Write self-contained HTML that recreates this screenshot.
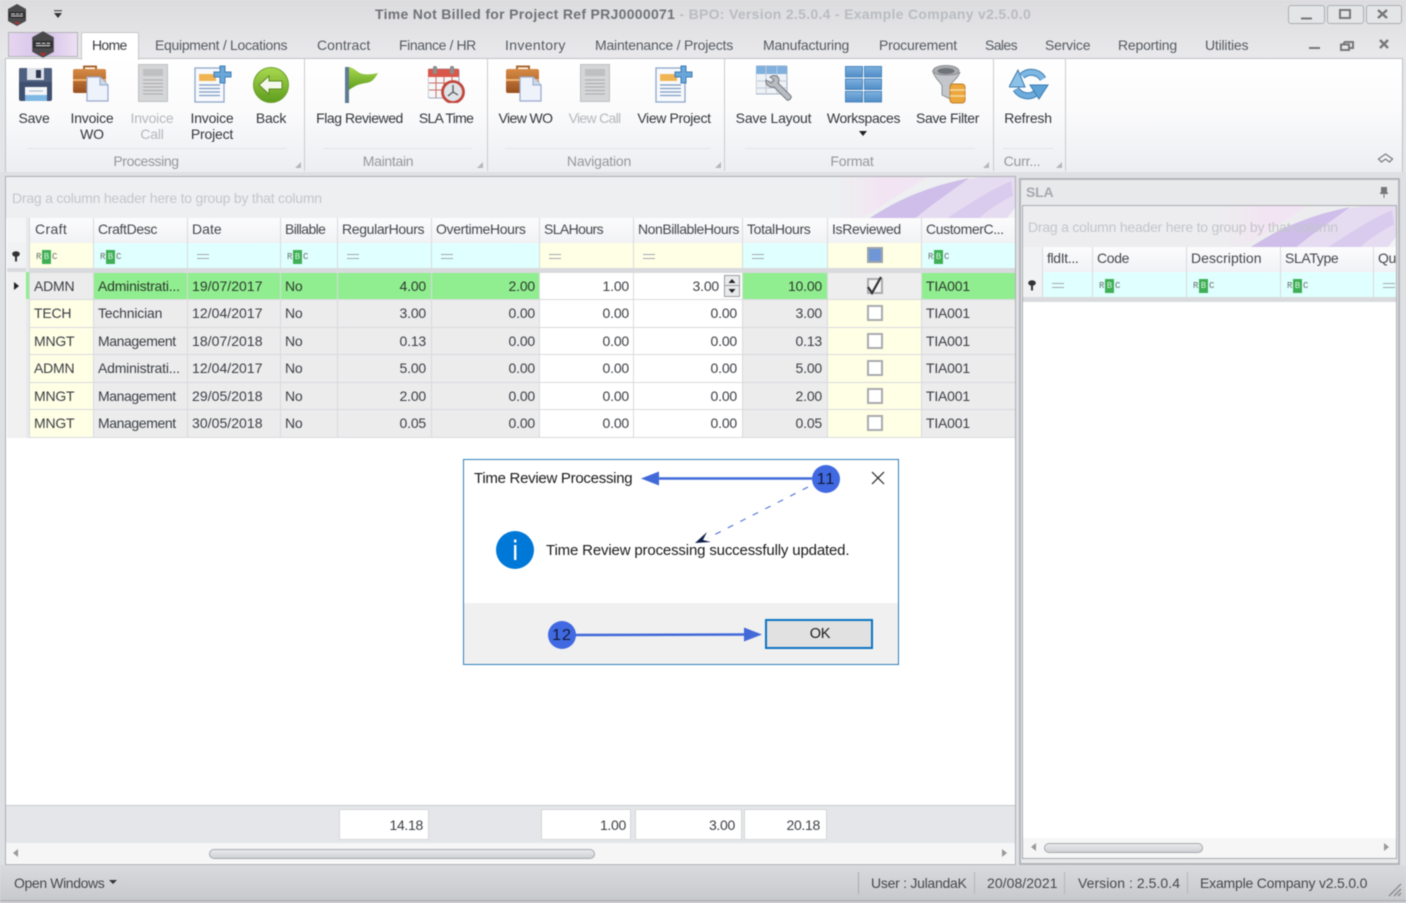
<!DOCTYPE html>
<html><head><meta charset="utf-8"><title>Time Not Billed</title>
<style>
html,body{margin:0;padding:0;width:1406px;height:903px;overflow:hidden;background:#e4e5e7}
#p{position:absolute;left:0;top:0;width:1406px;height:903px;overflow:hidden;font:14px "Liberation Sans",sans-serif;color:#3c3f44;filter:blur(.45px)}
.b{position:absolute}
.t{position:absolute;white-space:nowrap;line-height:16px;letter-spacing:-.2px}
.tab{top:37px;color:#555a61}
.rb{color:#33363b;text-align:center;transform:translateX(-50%);line-height:16px}
.dis{color:#b5b7bb}
.cap{top:153px;color:#94979c;transform:translateX(-50%)}
.ls{position:absolute;width:0;height:0;border-left:6px solid transparent;border-bottom:6px solid #b3b6ba}
.row{position:absolute;display:flex;height:26px}
.c{box-sizing:border-box;height:100%;padding:0 4px;line-height:26px;white-space:nowrap;overflow:hidden;margin-right:1px;letter-spacing:-.2px;background:#ececed;color:#3b3e43;flex:none}
.n{text-align:right}
.row>.n:nth-child(5),.row>.n:nth-child(8),.row>.n:nth-child(9){padding-right:5px}
.row>.c:nth-child(3){letter-spacing:.05px}
.row>.c.m{letter-spacing:-.4px}
.y{background:#ffffe6}.w{background:#fff}.g{background:#90ee90;color:#2c3a2c}.cy{background:#e0ffff}
.c.h{background:linear-gradient(#fcfcfd,#f1f2f4);color:#44474c;line-height:23px;letter-spacing:-.35px}
.eq{display:block;width:12px;height:3px;border-top:1.6px solid #a3a7ac;border-bottom:1.6px solid #a3a7ac;margin:11px 0 0 5px}
.abc{display:block;position:relative;width:22px;height:14px;margin:7px 0 0 2px;font:9px/14px "Liberation Mono",monospace;color:#67706b;letter-spacing:0}
.abc i{position:absolute;font-style:normal;left:0}.abc u{position:absolute;text-decoration:none;left:6px;width:9px;height:14px;background:#3fae55;color:#d6f5dc;text-align:center;line-height:14px}.abc s{position:absolute;text-decoration:none;left:16px}
.cb{display:block;box-sizing:border-box;width:16px;height:16px;border:2px solid #a9abae;background:#fff;margin:5px auto 0}
</style></head><body><div id="p">
<svg width="0" height="0" style="position:absolute">
<defs>
<linearGradient id="blu" x1="0" y1="0" x2="0" y2="1"><stop offset="0" stop-color="#7fb2df"/><stop offset="1" stop-color="#4f8cc6"/></linearGradient>
<linearGradient id="grn" x1="0" y1="0" x2="0" y2="1"><stop offset="0" stop-color="#a9d84f"/><stop offset="1" stop-color="#5d9d1d"/></linearGradient>
<linearGradient id="brn" x1="0" y1="0" x2="0" y2="1"><stop offset="0" stop-color="#d78b45"/><stop offset="1" stop-color="#99501f"/></linearGradient>
<linearGradient id="pk" x1="0" y1="0" x2="1" y2="0"><stop offset="0" stop-color="#f3e6f3" stop-opacity="0"/><stop offset=".5" stop-color="#f3e4f3"/><stop offset="1" stop-color="#f2e6f4"/></linearGradient>
<symbol id="wo" viewBox="0 0 38 38">
<path d="M12 6V2.500h12V6" fill="none" stroke="#a9662c" stroke-width="2"/>
<rect x="1" y="5" width="33" height="24" rx="2" fill="url(#brn)"/><rect x="1" y="15" width="33" height="2" fill="#efb36f"/>
<path d="M15 13h13l8 8v16H15z" fill="#eef2fb" stroke="#97a9c9" stroke-width="1.200"/><path d="M28 13v8h8" fill="#cbd7ea" stroke="#97a9c9"/>
</symbol>
<symbol id="dc" viewBox="0 0 30 38">
<rect x=".5" y=".5" width="29" height="37" fill="#d5d6d7" stroke="#bfc0c2"/><rect x="5" y="5" width="20" height="7" fill="#bfc0c1"/>
<path d="M5 16h20M5 19.500h20M5 23h20M5 26.500h20M5 30h20" stroke="#aaaaac"/>
</symbol>
<symbol id="pr" viewBox="0 0 38 38">
<rect x="1" y="3" width="29" height="34" fill="#f7f9fc" stroke="#8fa8c9" stroke-width="1.300"/><rect x="5" y="9" width="17" height="7" fill="#f0b552"/>
<path d="M5 20h21M5 23.500h21M5 27h21M5 30.500h21" stroke="#7e9cc2" stroke-width="1.200"/>
<path d="M26 1h5v6h6v5h-6v6h-5v-6h-6V7h6z" fill="#6aa7d9" stroke="#3f7db5"/>
</symbol>
<symbol id="hex" viewBox="0 0 20 22"><path d="M10 0l9 5v12l-9 5-9-5V5z" fill="#4a4a4c"/><rect x="2" y="8" width="16" height="6" fill="#2e2e30"/><path d="M4 10h4M9 10h3M13 10h3M4 12h12" stroke="#d9d9d9" stroke-width=".9"/><path d="M7 18h6l-3 3z" fill="#a33"/></symbol>
<symbol id="swoosh" viewBox="0 0 176 40" preserveAspectRatio="none">
<path d="M0 0H88L22 40H0z" fill="url(#pk)"/>
<path d="M30 40C60 22 92 8 142 0H176V40z" fill="#e6dcf1"/>
<path d="M30 40C55 24 85 10 130 1C112 14 92 27 76 40z" fill="#cebee9"/>
<path d="M108 40C130 26 152 12 172 4L174 18C160 25 148 33 140 40z" fill="#d9cbed"/>
<path d="M168 40L176 30V40z" fill="#f2f2f4"/>
</symbol>
</defs></svg>

<!-- title bar -->
<div class="b" style="left:0;top:0;width:1406px;height:58px;background:linear-gradient(#dcdcde,#e9e9eb)"></div>
<svg class="b" style="left:7px;top:4px" width="20" height="22"><use href="#hex"/></svg>
<svg class="b" style="left:53px;top:10px" width="11" height="9"><path d="M1 .7h8" stroke="#333"/><path d="M1 3h8L5 8z" fill="#333"/></svg>
<div class="t" style="left:375px;top:6px;font-weight:bold;color:#6f7277;letter-spacing:.3px">Time Not Billed for Project Ref PRJ0000071 <span style="color:#b9bcc1">- BPO: Version 2.5.0.4 - Example Company v2.5.0.0</span></div>
<div class="b" style="left:1288px;top:5px;width:35px;height:17px;border:1px solid #adafb3;border-radius:3px;background:#e4e5e7"></div>
<div class="b" style="left:1327px;top:5px;width:35px;height:17px;border:1px solid #adafb3;border-radius:3px;background:#e4e5e7"></div>
<div class="b" style="left:1366px;top:5px;width:34px;height:17px;border:1px solid #adafb3;border-radius:3px;background:#e4e5e7"></div>
<svg class="b" style="left:1288px;top:5px" width="115" height="19"><path d="M13 13.500h11" stroke="#777" stroke-width="2"/><rect x="52" y="5" width="10" height="8" fill="none" stroke="#777" stroke-width="2"/><path d="M90 5l9 8M99 5l-9 8" stroke="#777" stroke-width="2.400"/></svg>

<!-- tabs -->
<div class="b" style="left:8px;top:32px;width:68px;height:23px;border:1px solid #b3b5b9;background:linear-gradient(90deg,#e6d5f0,#d6c2ea 55%,#eee0f3)"></div>
<svg class="b" style="left:31px;top:31px" width="24" height="27"><use href="#hex"/></svg>
<div class="b" style="left:81px;top:32px;width:56px;height:27px;background:#fff;border:1px solid #c5c7ca;border-bottom:0;border-radius:2px 2px 0 0;z-index:2"></div>
<div class="t tab" style="left:92px;color:#3a3d42;z-index:3;letter-spacing:-.7px">Home</div>
<div class="t tab" style="left:155px;letter-spacing:-.3px">Equipment / Locations</div>
<div class="t tab" style="left:317px;letter-spacing:.05px">Contract</div>
<div class="t tab" style="left:399px;letter-spacing:-.4px">Finance / HR</div>
<div class="t tab" style="left:505px;letter-spacing:.35px">Inventory</div>
<div class="t tab" style="left:595px">Maintenance / Projects</div>
<div class="t tab" style="left:763px">Manufacturing</div>
<div class="t tab" style="left:879px">Procurement</div>
<div class="t tab" style="left:985px;letter-spacing:-.6px">Sales</div>
<div class="t tab" style="left:1045px">Service</div>
<div class="t tab" style="left:1118px">Reporting</div>
<div class="t tab" style="left:1205px">Utilities</div>
<svg class="b" style="left:1305px;top:38px" width="90" height="14"><path d="M4 10h11" stroke="#777" stroke-width="2"/><path d="M39 4h9v6h-3M39 4v2" fill="none" stroke="#777" stroke-width="2"/><rect x="36" y="6.500" width="8" height="5.500" fill="none" stroke="#777" stroke-width="2"/><path d="M75 2l8 8M83 2l-8 8" stroke="#777" stroke-width="2.400"/></svg>

<!-- ribbon -->
<div class="b" style="left:5px;top:58px;width:1396px;height:113px;border:1px solid #bfc1c5;background:linear-gradient(#fff,#fbfbfc 45%,#eceef1)"></div>
<div class="b" style="left:304px;top:59px;width:1px;height:112px;background:#c9cbce"></div>
<div class="b" style="left:487px;top:59px;width:1px;height:112px;background:#c9cbce"></div>
<div class="b" style="left:724px;top:59px;width:1px;height:112px;background:#c9cbce"></div>
<div class="b" style="left:993px;top:59px;width:1px;height:112px;background:#c9cbce"></div>
<div class="b" style="left:1065px;top:59px;width:1px;height:112px;background:#c9cbce"></div>
<div class="b" style="left:28px;top:148px;width:258px;height:1px;background:#e2e3e6"></div>
<div class="b" style="left:324px;top:148px;width:148px;height:1px;background:#e2e3e6"></div>
<div class="b" style="left:505px;top:148px;width:205px;height:1px;background:#e2e3e6"></div>
<div class="b" style="left:745px;top:148px;width:230px;height:1px;background:#e2e3e6"></div>
<div class="b" style="left:1003px;top:148px;width:50px;height:1px;background:#e2e3e6"></div>

<!-- ribbon icons -->
<svg class="b" style="left:19px;top:68px" width="33" height="33"><rect width="33" height="33" rx="2" fill="#3e4f6f"/><rect y="0" width="33" height="14" fill="#5a6d8c" opacity=".6"/><rect x="8" y="0" width="17" height="12" fill="#dfe3ea"/><rect x="17" y="2" width="5" height="8" fill="#2d3850"/><rect x="6" y="19" width="22" height="14" fill="#f4f6f9"/><rect x="6" y="27" width="22" height="6" fill="#7fb8e4"/><path d="M10 23h14" stroke="#a9b3c4"/></svg>
<svg class="b" style="left:72px;top:64px" width="38" height="38"><use href="#wo"/></svg>
<svg class="b" style="left:138px;top:64px" width="30" height="38"><use href="#dc"/></svg>
<svg class="b" style="left:194px;top:65px" width="38" height="38"><use href="#pr"/></svg>
<svg class="b" style="left:253px;top:67px" width="36" height="36"><circle cx="18" cy="18" r="17.500" fill="url(#grn)" stroke="#6c9f2c"/><path d="M6 18l10-9v5h13v8H16v5z" fill="#f4f8ee" stroke="#5d8a22"/></svg>
<svg class="b" style="left:344px;top:66px" width="36" height="38"><rect x="1" y="1" width="4" height="36" fill="#5e7a94"/><path d="M5 1c6 1 8 6 14 7s10 0 15-1c-3 5-5 9-12 10s-10 2-17 7z" fill="url(#grn)"/></svg>
<svg class="b" style="left:428px;top:65px" width="38" height="38"><rect x="0" y="4" width="31" height="29" rx="2" fill="#f6f7f9" stroke="#9aa9bb"/><rect x="0" y="4" width="31" height="8" fill="#d9574a"/><rect x="5" y="1" width="4" height="8" rx="1.500" fill="#8d8d8d"/><rect x="22" y="1" width="4" height="8" rx="1.500" fill="#8d8d8d"/><path d="M1 18h29M1 25h29M8 12v21M16 12v21M24 12v21" stroke="#c96f67"/><circle cx="25" cy="27" r="10.500" fill="#dfe4e8" stroke="#c2473d" stroke-width="2.800"/><path d="M25 20v7l-5 4M25 27l5 3" stroke="#555" stroke-width="1.300" fill="none"/></svg>
<svg class="b" style="left:505px;top:64px" width="38" height="38"><use href="#wo"/></svg>
<svg class="b" style="left:580px;top:64px" width="30" height="38"><use href="#dc"/></svg>
<svg class="b" style="left:655px;top:65px" width="38" height="38"><use href="#pr"/></svg>
<svg class="b" style="left:756px;top:65px" width="38" height="38"><rect x="0" y="1" width="31" height="28" rx="1" fill="#eef1f5" stroke="#a4b3c4"/><rect x="0" y="1" width="31" height="8" fill="#7fb0de"/><path d="M1 16h30M1 23h30M10 1v28M21 1v28" stroke="#bfcbd8"/><path d="M14 12c4-3 9-1 9 3 0 1 0 2-1 3l13 13c1 2-2 5-4 4L18 22c-4 1-9-2-8-7l5 3 3-3z" fill="#b9bcc1" stroke="#74797f"/></svg>
<svg class="b" style="left:845px;top:66px" width="37" height="37"><g fill="url(#blu)" stroke="#4a86bd"><rect x=".5" y=".5" width="17" height="10.500"/><rect x="19.500" y=".5" width="17" height="10.500"/><rect x=".5" y="13" width="17" height="10.500"/><rect x="19.500" y="13" width="17" height="10.500"/><rect x=".5" y="25.500" width="17" height="10.500"/><rect x="19.500" y="25.500" width="17" height="10.500"/></g></svg>
<svg class="b" style="left:932px;top:65px" width="34" height="39"><ellipse cx="14" cy="6" rx="13" ry="5.500" fill="#a9adb1" stroke="#8d9095"/><ellipse cx="14" cy="6" rx="8.500" ry="3" fill="#6f7378"/><path d="M1 7c2 7 8 10 9 14v9l8 4V21c1-4 8-7 10-14-3 4-23 4-27 0z" fill="#c3c6ca" stroke="#8d9095"/><rect x="18" y="19" width="15" height="19" rx="3" fill="#eda73f" stroke="#c17f25"/><path d="M18 25h15M18 31h15" stroke="#f8dd9f" stroke-width="1.500"/></svg>
<svg class="b" style="left:1009px;top:68px" width="41" height="33"><g fill="none" stroke-linecap="butt"><path d="M13 8A13.500 13.500 0 0 1 34 11" stroke="#3b7cb0" stroke-width="7"/><path d="M13 8A13.500 13.500 0 0 1 34 11" stroke="#7db7e3" stroke-width="5"/><path d="M27 25A13.500 13.500 0 0 1 7 21" stroke="#3b7cb0" stroke-width="7"/><path d="M27 25A13.500 13.500 0 0 1 7 21" stroke="#6eacdc" stroke-width="5"/></g><path d="M9 2L0 19h16z" fill="#8cc1e8" stroke="#3b7cb0"/><path d="M30 31L21 17h18z" fill="#5fa3d6" stroke="#3b7cb0"/></svg>

<!-- ribbon text -->
<div class="t rb" style="left:34px;top:110px">Save</div>
<div class="t rb" style="left:92px;top:110px">Invoice<br>WO</div>
<div class="t rb dis" style="left:152px;top:110px">Invoice<br>Call</div>
<div class="t rb" style="left:212px;top:110px">Invoice<br>Project</div>
<div class="t rb" style="left:271px;top:110px">Back</div>
<div class="t rb" style="left:359.500px;top:110px;letter-spacing:-.45px">Flag Reviewed</div>
<div class="t rb" style="left:446px;top:110px;letter-spacing:-.7px">SLA Time</div>
<div class="t rb" style="left:525.500px;top:110px;letter-spacing:-.6px">View WO</div>
<div class="t rb dis" style="left:594.500px;top:110px;letter-spacing:-.7px">View Call</div>
<div class="t rb" style="left:674px;top:110px;letter-spacing:-.35px">View Project</div>
<div class="t rb" style="left:773.500px;top:110px">Save Layout</div>
<div class="t rb" style="left:863.500px;top:110px;letter-spacing:-.35px">Workspaces</div>
<div class="b" style="left:859px;top:131px;border:4px solid transparent;border-top:5px solid #222;border-bottom:0"></div>
<div class="t rb" style="left:947.500px;top:110px;letter-spacing:-.35px">Save Filter</div>
<div class="t rb" style="left:1028px;top:110px">Refresh</div>
<div class="t cap" style="left:146px;letter-spacing:-.4px">Processing</div>
<div class="t cap" style="left:388px;letter-spacing:-.3px">Maintain</div>
<div class="t cap" style="left:599px">Navigation</div>
<div class="t cap" style="left:852px">Format</div>
<div class="t cap" style="left:1022px">Curr...</div>
<div class="ls" style="left:295px;top:162px"></div><div class="ls" style="left:477px;top:162px"></div><div class="ls" style="left:715px;top:162px"></div><div class="ls" style="left:983px;top:162px"></div><div class="ls" style="left:1056px;top:162px"></div>
<svg class="b" style="left:1377px;top:152px" width="17" height="13"><path d="M1.500 7l7-5 7 5-3 3-4-3-4 3z" fill="#f2f3f5" stroke="#7c7f84" stroke-width="1.300"/></svg>

<!-- main grid -->
<div class="b" style="left:0;top:172px;width:1406px;height:693px;background:#dfe0e3"></div>
<div class="b" style="left:5px;top:176px;width:1009px;height:687px;border:1px solid #aeb0b4;background:#fff"></div>
<div class="b" style="left:6px;top:177px;width:1009px;height:41px;background:#eeeff1"></div>
<svg class="b" style="left:840px;top:177px" width="175" height="41"><use href="#swoosh"/></svg>
<div class="t" style="left:12px;top:190px;color:#c3c5c9;letter-spacing:-.22px">Drag a column header here to group by that column</div>

<div class="b" style="left:7px;top:218px;width:1008px;height:220px;background:#d9dadd"></div>
<div class="b" style="left:7px;top:218px;width:19px;height:25px;background:#f4f5f6"></div>
<div class="b" style="left:26px;top:218px;width:3px;height:220px;background:#e8e9eb"></div>
<div class="b" style="left:7px;top:243px;width:19px;height:25px;background:#f1f2f3"></div>
<svg class="b" style="left:12px;top:251px" width="8" height="11"><ellipse cx="4" cy="3" rx="3.800" ry="2.800" fill="#333"/><rect x="3" y="4" width="2" height="6.500" fill="#333"/></svg>
<div class="b" style="left:7px;top:272px;width:19px;height:166px;background:#f1f1f2"></div>
<div class="b" style="left:26px;top:272px;width:3px;height:27px;background:#90ee90"></div>
<div class="b" style="left:14px;top:282px;border:4px solid transparent;border-left:5px solid #222;border-right:0"></div>

<div class="row" style="left:30px;top:218px;height:25px">
<div class="c h" style="width:63px;letter-spacing:.35px;padding-left:5px">Craft</div><div class="c h" style="width:93px">CraftDesc</div><div class="c h" style="width:92px">Date</div><div class="c h" style="width:56px;letter-spacing:-.6px">Billable</div><div class="c h" style="width:93px">RegularHours</div><div class="c h" style="width:107px">OvertimeHours</div><div class="c h" style="width:93px;letter-spacing:-.6px">SLAHours</div><div class="c h" style="width:108px;letter-spacing:-.45px">NonBillableHours</div><div class="c h" style="width:84px">TotalHours</div><div class="c h" style="width:93px">IsReviewed</div><div class="c h" style="width:93px;margin:0;letter-spacing:-.4px">CustomerC...</div>
</div>
<div class="row" style="left:30px;top:243px;height:25px">
<div class="c y" style="width:63px"><span class="abc"><i>R</i><u>B</u><s>C</s></span></div><div class="c cy" style="width:93px"><span class="abc"><i>R</i><u>B</u><s>C</s></span></div><div class="c cy" style="width:92px"><span class="eq"></span></div><div class="c cy" style="width:56px"><span class="abc"><i>R</i><u>B</u><s>C</s></span></div><div class="c cy" style="width:93px"><span class="eq"></span></div><div class="c cy" style="width:107px"><span class="eq"></span></div><div class="c y" style="width:93px"><span class="eq"></span></div><div class="c y" style="width:108px"><span class="eq"></span></div><div class="c cy" style="width:84px"><span class="eq"></span></div><div class="c y" style="width:93px"><span style="display:block;box-sizing:border-box;width:16px;height:16px;border:2px solid #9ea3aa;background:#6f97d8;margin:4px auto 0"></span></div><div class="c cy" style="width:93px;margin:0"><span class="abc"><i>R</i><u>B</u><s>C</s></span></div>
</div>

<div class="row" style="left:30px;top:273px;height:26px">
<div class="c" style="width:63px;background:#ececed">ADMN</div><div class="c g" style="width:93px">Administrati...</div><div class="c g" style="width:92px">19/07/2017</div><div class="c g" style="width:56px">No</div><div class="c g n" style="width:93px">4.00</div><div class="c g n" style="width:107px">2.00</div><div class="c w n" style="width:93px">1.00</div><div class="c w n" style="width:108px;padding-right:23px">3.00</div><div class="c g n" style="width:84px">10.00</div><div class="c" style="width:93px;background:#eeeeef"><span class="cb" style="background:#f3f3f3"></span></div><div class="c g" style="width:93px;margin:0">TIA001</div>
</div>
<div class="b" style="left:724px;top:275px;width:16px;height:22px;background:#e9eaec;border:1px solid #9b9da1;box-sizing:border-box"></div>
<svg class="b" style="left:724px;top:275px" width="16" height="22"><path d="M1 10.500h14" stroke="#9b9da1"/><path d="M4.500 8l3.500-4 3.500 4zM4.500 14l3.500 4 3.500-4z" fill="#222"/></svg>
<svg class="b" style="left:865px;top:276px" width="19" height="20"><path d="M3 11l4 6L16 1" fill="none" stroke="#333" stroke-width="2.200"/></svg>

<div class="row" style="left:30px;top:300px;height:27px">
<div class="c y" style="width:63px">TECH</div><div class="c" style="width:93px">Technician</div><div class="c" style="width:92px">12/04/2017</div><div class="c" style="width:56px">No</div><div class="c n" style="width:93px">3.00</div><div class="c n" style="width:107px">0.00</div><div class="c w n" style="width:93px">0.00</div><div class="c w n" style="width:108px">0.00</div><div class="c n" style="width:84px">3.00</div><div class="c y" style="width:93px"><span class="cb"></span></div><div class="c" style="width:93px;margin:0">TIA001</div>
</div>
<div class="row" style="left:30px;top:328px;height:26px">
<div class="c y" style="width:63px">MNGT</div><div class="c m" style="width:93px">Management</div><div class="c" style="width:92px">18/07/2018</div><div class="c" style="width:56px">No</div><div class="c n" style="width:93px">0.13</div><div class="c n" style="width:107px">0.00</div><div class="c w n" style="width:93px">0.00</div><div class="c w n" style="width:108px">0.00</div><div class="c n" style="width:84px">0.13</div><div class="c y" style="width:93px"><span class="cb"></span></div><div class="c" style="width:93px;margin:0">TIA001</div>
</div>
<div class="row" style="left:30px;top:355px;height:27px">
<div class="c y" style="width:63px">ADMN</div><div class="c" style="width:93px">Administrati...</div><div class="c" style="width:92px">12/04/2017</div><div class="c" style="width:56px">No</div><div class="c n" style="width:93px">5.00</div><div class="c n" style="width:107px">0.00</div><div class="c w n" style="width:93px">0.00</div><div class="c w n" style="width:108px">0.00</div><div class="c n" style="width:84px">5.00</div><div class="c y" style="width:93px"><span class="cb"></span></div><div class="c" style="width:93px;margin:0">TIA001</div>
</div>
<div class="row" style="left:30px;top:383px;height:26px">
<div class="c y" style="width:63px">MNGT</div><div class="c m" style="width:93px">Management</div><div class="c" style="width:92px">29/05/2018</div><div class="c" style="width:56px">No</div><div class="c n" style="width:93px">2.00</div><div class="c n" style="width:107px">0.00</div><div class="c w n" style="width:93px">0.00</div><div class="c w n" style="width:108px">0.00</div><div class="c n" style="width:84px">2.00</div><div class="c y" style="width:93px"><span class="cb"></span></div><div class="c" style="width:93px;margin:0">TIA001</div>
</div>
<div class="row" style="left:30px;top:410px;height:27px">
<div class="c y" style="width:63px">MNGT</div><div class="c m" style="width:93px">Management</div><div class="c" style="width:92px">30/05/2018</div><div class="c" style="width:56px">No</div><div class="c n" style="width:93px">0.05</div><div class="c n" style="width:107px">0.00</div><div class="c w n" style="width:93px">0.00</div><div class="c w n" style="width:108px">0.00</div><div class="c n" style="width:84px">0.05</div><div class="c y" style="width:93px"><span class="cb"></span></div><div class="c" style="width:93px;margin:0">TIA001</div>
</div>

<!-- footer + scrollbar -->
<div class="b" style="left:6px;top:805px;width:1009px;height:38px;background:#e5e6e9;border-top:1px solid #c8cacd;box-sizing:border-box"></div>
<div class="b" style="left:6px;top:843px;width:1009px;height:20px;background:#f6f6f7"></div>
<div class="t n" style="left:339px;top:809px;width:90px;height:31px;box-sizing:border-box;border:1px solid #d5d6d9;background:#fff;text-align:right;padding:7px 5px 0 0;letter-spacing:-.3px">14.18</div>
<div class="t n" style="left:541px;top:809px;width:90px;height:31px;box-sizing:border-box;border:1px solid #d5d6d9;background:#fff;text-align:right;padding:7px 4px 0 0;letter-spacing:-.3px">1.00</div>
<div class="t n" style="left:635px;top:809px;width:107px;height:31px;box-sizing:border-box;border:1px solid #d5d6d9;background:#fff;text-align:right;padding:7px 6px 0 0;letter-spacing:-.3px">3.00</div>
<div class="t n" style="left:744px;top:809px;width:83px;height:31px;box-sizing:border-box;border:1px solid #d5d6d9;background:#fff;text-align:right;padding:7px 6px 0 0;letter-spacing:-.3px">20.18</div>
<div class="b" style="left:209px;top:849px;width:384px;height:8px;border:1px solid #a5a8ac;border-radius:5px;background:linear-gradient(#e9eaec,#cfd1d4)"></div>
<div class="b" style="left:13px;top:849px;border:4px solid transparent;border-right:5px solid #999;border-left:0"></div>
<div class="b" style="left:1002px;top:849px;border:4px solid transparent;border-left:5px solid #999;border-right:0"></div>

<!-- right panel -->
<div class="b" style="left:1019px;top:178px;width:377px;height:683px;border:2px solid #b3b5b9;background:#e8e9eb"></div>
<div class="t" style="left:1026px;top:184px;font-weight:bold;color:#a5a8ad">SLA</div>
<svg class="b" style="left:1379px;top:186px" width="10" height="12"><path d="M2 1h6v5l1 1v1H1V7l1-1zM4.500 8h1v4h-1z" fill="#777"/></svg>
<div class="b" style="left:1022px;top:205px;width:375px;height:654px;border:1px solid #a9abaf;box-sizing:border-box;background:#fff"></div>
<div class="b" style="left:1023px;top:206px;width:373px;height:41px;background:#ededef"></div>
<svg class="b" style="left:1221px;top:206px" width="175" height="41"><use href="#swoosh"/></svg>
<div class="t" style="left:1028px;top:219px;color:#c3c5c9;letter-spacing:-.22px">Drag a column header here to group by that column</div>
<div class="b" style="left:1023px;top:247px;width:373px;height:55px;background:#d9dadd"></div>
<div class="b" style="left:1023px;top:247px;width:19px;height:50px;background:#f1f2f3"></div>
<svg class="b" style="left:1028px;top:280px" width="8" height="11"><ellipse cx="4" cy="3" rx="3.800" ry="2.800" fill="#333"/><rect x="3" y="4" width="2" height="6.500" fill="#333"/></svg>
<div class="row" style="left:1043px;top:247px;height:25px;width:353px;overflow:hidden">
<div class="c h" style="width:49px">fldIt...</div><div class="c h" style="width:93px">Code</div><div class="c h" style="width:93px">Description</div><div class="c h" style="width:92px">SLAType</div><div class="c h" style="width:24px;margin:0">Qu</div>
</div>
<div class="row" style="left:1043px;top:272px;height:25px;width:353px;overflow:hidden">
<div class="c cy" style="width:49px"><span class="eq"></span></div><div class="c cy" style="width:93px"><span class="abc"><i>R</i><u>B</u><s>C</s></span></div><div class="c cy" style="width:93px"><span class="abc"><i>R</i><u>B</u><s>C</s></span></div><div class="c cy" style="width:92px"><span class="abc"><i>R</i><u>B</u><s>C</s></span></div><div class="c cy" style="width:24px;margin:0"><span class="eq"></span></div>
</div>
<div class="b" style="left:1023px;top:838px;width:373px;height:20px;background:#f6f6f7"></div>
<div class="b" style="left:1044px;top:843px;width:157px;height:8px;border:1px solid #a5a8ac;border-radius:5px;background:linear-gradient(#e9eaec,#cfd1d4)"></div>
<div class="b" style="left:1031px;top:843px;border:4px solid transparent;border-right:5px solid #999;border-left:0"></div>
<div class="b" style="left:1384px;top:843px;border:4px solid transparent;border-left:5px solid #999;border-right:0"></div>

<!-- status bar -->
<div class="b" style="left:0;top:865px;width:1406px;height:38px;background:linear-gradient(#d9dade,#c7c8cc)"></div>
<div class="b" style="left:0;top:900px;width:1406px;height:1px;background:#a9abaf"></div>
<div class="t" style="left:14px;top:875px;color:#45484d;letter-spacing:-.38px">Open Windows</div>
<div class="b" style="left:109px;top:880px;border:4px solid transparent;border-top:4px solid #333;border-bottom:0"></div>
<div class="b" style="left:858px;top:872px;width:1px;height:22px;background:#a9abaf"></div>
<div class="b" style="left:974px;top:872px;width:1px;height:22px;background:#b3b5b9"></div>
<div class="b" style="left:1064px;top:872px;width:1px;height:22px;background:#b3b5b9"></div>
<div class="b" style="left:1187px;top:872px;width:1px;height:22px;background:#b3b5b9"></div>
<div class="t" style="left:871px;top:875px;color:#45484d;letter-spacing:-.27px">User : JulandaK</div>
<div class="t" style="left:987px;top:875px;color:#45484d;letter-spacing:.05px">20/08/2021</div>
<div class="t" style="left:1078px;top:875px;color:#45484d;letter-spacing:.05px">Version : 2.5.0.4</div>
<div class="t" style="left:1200px;top:875px;color:#45484d">Example Company v2.5.0.0</div>
<svg class="b" style="left:1386px;top:881px" width="16" height="16"><path d="M15 3L3 15M15 8l-7 7M15 12l-3 3" stroke="#85888c" stroke-width="1.300"/></svg>

<!-- dialog -->
<div class="b" style="left:463px;top:459px;width:434px;height:204px;border:1px solid #2f7fb8;background:#fff"></div>
<div class="b" style="left:464px;top:603px;width:434px;height:61px;background:#f0f0f0"></div>
<div class="t" style="left:474px;top:471px;color:#1a1a1a;font-size:15px;letter-spacing:-.28px">Time Review Processing</div>
<svg class="b" style="left:870px;top:470px" width="16" height="16"><path d="M2 2l12 12M14 2L2 14" stroke="#222" stroke-width="1.200"/></svg>
<svg class="b" style="left:495px;top:530px" width="40" height="40"><circle cx="20" cy="20" r="19" fill="#0078d7"/><rect x="19" y="15" width="2.400" height="15" fill="#fff"/><rect x="19" y="9.500" width="2.400" height="3" fill="#fff"/></svg>
<div class="t" style="left:546px;top:543px;color:#1a1a1a;font-size:15px;letter-spacing:-.16px">Time Review processing successfully updated.</div>
<div class="b" style="left:765px;top:619px;width:104px;height:26px;border:2px solid #0a74c4;background:#e1e1e1"></div>
<div class="t" style="left:766px;top:626px;width:108px;text-align:center;color:#1a1a1a;font-size:14.500px">OK</div>
<svg class="b" style="left:540px;top:460px" width="310" height="190">
<path d="M272 18.500H118" stroke="#4169d8" stroke-width="2.500"/><path d="M101 18.500l18-7v14z" fill="#4169d8"/>
<path d="M268 27L168 78" stroke="#4a6fd0" stroke-width="1.100" stroke-dasharray="6 8"/><path d="M155 83l12-11-4 8 8 2z" fill="#10204a"/>
<path d="M34 175l172-.5" stroke="#4169d8" stroke-width="2.500"/><path d="M222 174.500l-18-7v14z" fill="#4169d8"/>
<circle cx="286" cy="19" r="14" fill="#4169e1"/><circle cx="22" cy="175" r="14" fill="#4169e1"/>
</svg>
<div class="t" style="left:812px;top:472px;width:28px;text-align:center;color:#101a3a;font-size:16px;letter-spacing:1px">11</div>
<div class="t" style="left:548px;top:628px;width:28px;text-align:center;color:#101a3a;font-size:16px;letter-spacing:1px">12</div>
</div></body></html>
